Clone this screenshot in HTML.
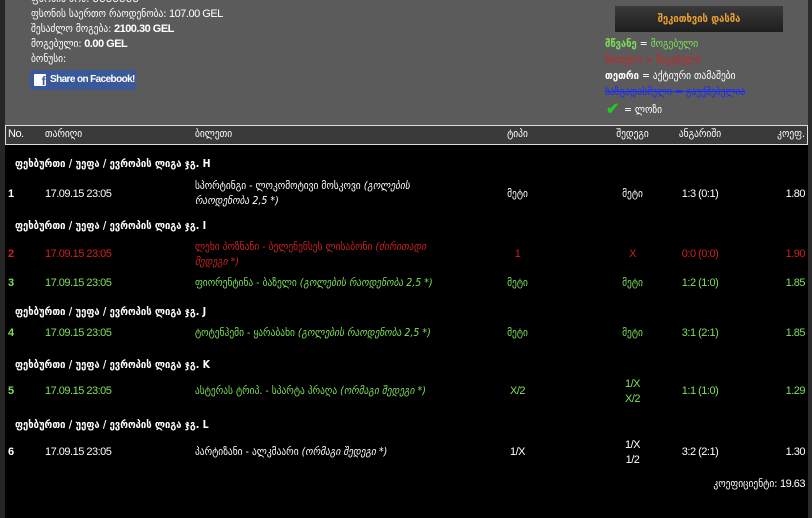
<!DOCTYPE html>
<html><head><meta charset="utf-8">
<style>
*{margin:0;padding:0;box-sizing:border-box}
body{width:812px;height:518px;background:#000;position:relative;overflow:hidden;font-family:"Liberation Sans",sans-serif;font-size:11px;letter-spacing:-0.5px;color:#fff}
.a{position:absolute;white-space:nowrap;line-height:15px}
.geo{font-family:"DejaVu Sans Condensed","DejaVu Sans",sans-serif;font-size:10.5px;letter-spacing:0}
.top{position:absolute;left:5px;top:0;width:803px;height:125px;background:#5b5b5b}
.lstrip{position:absolute;left:0;top:0;width:5px;height:518px;background:#262626}
.rstrip{position:absolute;left:808px;top:0;width:4px;height:518px;background:#2a2a2a}
.hdr{position:absolute;left:5px;top:125px;width:803px;height:20px;border:1px solid #ddd;background:#3a3a3a}
.g{color:#7ee05a}.r{color:#cc2222}
.c{text-align:center}
.rt{right:7px;text-align:right}
i{font-style:italic}
</style></head><body>
<div class="lstrip"></div><div class="rstrip"></div>
<div class="top"></div>
<div class="a geo" style="left:31px;top:-8px">ფსონის ნომ: ᲛᲛᲛᲛᲛᲛᲛ</div>
<div class="a" style="left:31px;top:7px"><span class="geo">ფსონის საერთო რაოდენობა:</span> 107.00 GEL</div>
<div class="a" style="left:31px;top:22px"><span class="geo">შესაძლო მოგება:</span> <b>2100.30 GEL</b></div>
<div class="a" style="left:31px;top:37px"><span class="geo">მოგებული:</span> <b>0.00 GEL</b></div>
<div class="a geo" style="left:31px;top:52px">ბონუსი:</div>
<div class="a" style="left:30px;top:70px;width:106px;height:20px;background:#3b5998;border-radius:2px;font-size:10px;line-height:20px;padding-left:20px;font-weight:bold;letter-spacing:-.6px">
<span style="position:absolute;left:4px;top:4px;width:12px;height:12px;background:#fff;border-radius:1px;color:#3b5998;font-size:12px;line-height:14px;text-align:right;padding-right:1px">f</span>Share on Facebook!</div>
<div class="a geo c" style="left:615px;top:6px;width:168px;height:26px;background:linear-gradient(#3a3a3a,#1e1e1e);color:#f0a030;line-height:26px;font-weight:bold">შეკითხვის დასმა</div>
<div class="a geo" style="left:605px;top:37px"><b class="g">მწვანე</b> = <span class="g">მოგებული</span></div>
<div class="a geo r" style="left:605px;top:53px">წითელი = წაგებული</div>
<div class="a geo" style="left:605px;top:69px"><b>თეთრი</b> = აქტიური თამაშები</div>
<div class="a geo" style="left:605px;top:85px;color:#1a2aff;text-decoration:line-through">ხაზგადასმული = გაუქმებულია</div>
<div class="a" style="left:606px;top:102px;color:#22cc22;font-size:16px;font-weight:bold">✔</div>
<div class="a geo" style="left:624px;top:103px">= ლოზი</div>
<div class="hdr"></div>
<div class="a" style="left:8px;top:127px">No.</div>
<div class="a geo" style="left:45px;top:127px">თარიღი</div>
<div class="a geo" style="left:195px;top:127px">ბილეთი</div>
<div class="a geo c" style="left:490px;top:127px;width:55px">ტიპი</div>
<div class="a geo c" style="left:600px;top:127px;width:65px">შედეგი</div>
<div class="a geo c" style="left:665px;top:127px;width:70px">ანგარიში</div>
<div class="a geo rt" style="top:127px">კოეფ.</div>

<div class="a geo" style="left:15px;top:157px;font-weight:bold">ფეხბურთი / უეფა / ევროპის ლიგა ჯგ. H</div>
<div class="a" style="left:8px;top:187px;font-weight:bold">1</div><div class="a" style="left:45px;top:187px">17.09.15 23:05</div>
<div class="a geo" style="left:195px;top:179px">სპორტინგი - ლოკომოტივი მოსკოვი <i>(გოლების</i><br><i>რაოდენობა 2,5 *)</i></div>
<div class="a geo c" style="left:490px;top:187px;width:55px">მეტი</div>
<div class="a geo c" style="left:600px;top:187px;width:65px">მეტი</div>
<div class="a c" style="left:665px;top:187px;width:70px">1:3 (0:1)</div>
<div class="a rt" style="top:187px">1.80</div>

<div class="a geo" style="left:15px;top:219px;font-weight:bold">ფეხბურთი / უეფა / ევროპის ლიგა ჯგ. I</div>
<div class="r">
<div class="a" style="left:8px;top:247px;font-weight:bold">2</div><div class="a" style="left:45px;top:247px">17.09.15 23:05</div>
<div class="a geo" style="left:195px;top:240px">ლეხი პოზნანი - ბელენენსეს ლისაბონი <i>(ძირითადი</i><br><i>მედეგი *)</i></div>
<div class="a c" style="left:490px;top:247px;width:55px">1</div>
<div class="a c" style="left:600px;top:247px;width:65px">X</div>
<div class="a c" style="left:665px;top:247px;width:70px">0:0 (0:0)</div>
<div class="a rt" style="top:247px">1.90</div></div>
<div class="g">
<div class="a" style="left:8px;top:276px;font-weight:bold">3</div><div class="a" style="left:45px;top:276px">17.09.15 23:05</div>
<div class="a geo" style="left:195px;top:276px">ფიორენტინა - ბაზელი <i>(გოლების რაოდენობა 2,5 *)</i></div>
<div class="a geo c" style="left:490px;top:276px;width:55px">მეტი</div>
<div class="a geo c" style="left:600px;top:276px;width:65px">მეტი</div>
<div class="a c" style="left:665px;top:276px;width:70px">1:2 (1:0)</div>
<div class="a rt" style="top:276px">1.85</div></div>

<div class="a geo" style="left:15px;top:305px;font-weight:bold">ფეხბურთი / უეფა / ევროპის ლიგა ჯგ. J</div>
<div class="g">
<div class="a" style="left:8px;top:326px;font-weight:bold">4</div><div class="a" style="left:45px;top:326px">17.09.15 23:05</div>
<div class="a geo" style="left:195px;top:326px">ტოტენჰემი - ყარაბახი <i>(გოლების რაოდენობა 2,5 *)</i></div>
<div class="a geo c" style="left:490px;top:326px;width:55px">მეტი</div>
<div class="a geo c" style="left:600px;top:326px;width:65px">მეტი</div>
<div class="a c" style="left:665px;top:326px;width:70px">3:1 (2:1)</div>
<div class="a rt" style="top:326px">1.85</div></div>

<div class="a geo" style="left:15px;top:358px;font-weight:bold">ფეხბურთი / უეფა / ევროპის ლიგა ჯგ. K</div>
<div class="g">
<div class="a" style="left:8px;top:384px;font-weight:bold">5</div><div class="a" style="left:45px;top:384px">17.09.15 23:05</div>
<div class="a geo" style="left:195px;top:384px">ასტერას ტრიპ. - სპარტა პრაღა <i>(ორმაგი შედეგი *)</i></div>
<div class="a c" style="left:490px;top:384px;width:55px">X/2</div>
<div class="a c" style="left:600px;top:377px;width:65px">1/X<br>X/2</div>
<div class="a c" style="left:665px;top:384px;width:70px">1:1 (1:0)</div>
<div class="a rt" style="top:384px">1.29</div></div>

<div class="a geo" style="left:15px;top:418px;font-weight:bold">ფეხბურთი / უეფა / ევროპის ლიგა ჯგ. L</div>
<div class="a" style="left:8px;top:445px;font-weight:bold">6</div><div class="a" style="left:45px;top:445px">17.09.15 23:05</div>
<div class="a geo" style="left:195px;top:445px">პარტიზანი - ალკმაარი <i>(ორმაგი შედეგი *)</i></div>
<div class="a c" style="left:490px;top:445px;width:55px">1/X</div>
<div class="a c" style="left:600px;top:438px;width:65px">1/X<br>1/2</div>
<div class="a c" style="left:665px;top:445px;width:70px">3:2 (2:1)</div>
<div class="a rt" style="top:445px">1.30</div>
<div class="a rt" style="top:477px"><span class="geo">კოეფიციენტი:</span> 19.63</div>
</body></html>
